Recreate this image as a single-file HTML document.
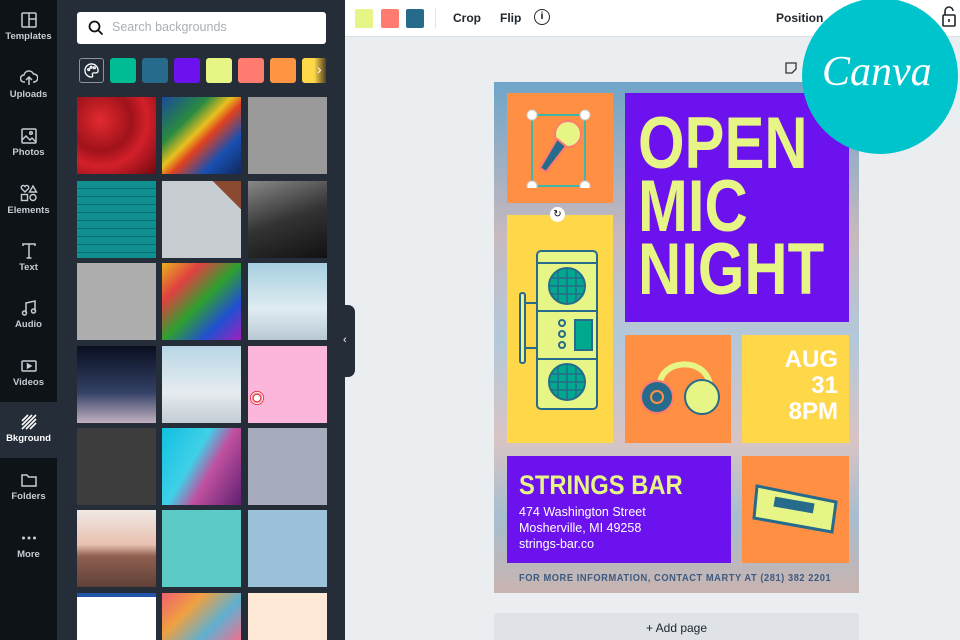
<!DOCTYPE html>
<html style="overflow:hidden;width:960px;height:640px"><head><meta charset="utf-8"><style>
*{margin:0;padding:0;box-sizing:border-box}
body{width:960px;height:640px;overflow:hidden;position:relative;font-family:"Liberation Sans",sans-serif;background:#ebeef1}
.abs{position:absolute}
.rail{left:0;top:0;width:57px;height:640px;background:#0e1318}
.ri{position:absolute;left:0;width:57px;text-align:center;color:#c7ccd3;font-size:9.5px;font-weight:bold}
.ri svg{display:block;margin:0 auto 3px}
.panel{left:57px;top:0;width:288px;height:640px;background:#252d39}
.t{position:absolute;width:79px;height:77px}
.top{left:345px;top:0;width:615px;height:37px;background:#fff;border-bottom:1px solid #dde1e5}
.box{position:absolute}
</style></head><body>
<div class="abs rail"></div>
<div class="abs" style="left:0;top:402px;width:57px;height:56px;background:#252d39"></div>
<div class="ri" style="top:12px"><svg width="16" height="16" viewBox="0 0 16 16" fill="none" stroke="#c7ccd3" stroke-width="1.5"><rect x="1" y="1" width="14" height="14" rx="1"/><path d="M8 1v14M8 7h7"/></svg>Templates</div>
<div class="ri" style="top:70px"><svg width="18" height="16" viewBox="0 0 18 16" fill="none" stroke="#c7ccd3" stroke-width="1.5"><path d="M5 12H4a3.5 3.5 0 0 1 0-7 5 5 0 0 1 9.5-1A4 4 0 0 1 14 12h-1M9 15V7M6 10l3-3 3 3"/></svg>Uploads</div>
<div class="ri" style="top:128px"><svg width="16" height="16" viewBox="0 0 16 16" fill="none" stroke="#c7ccd3" stroke-width="1.5"><rect x="1" y="1" width="14" height="14" rx="1"/><path d="M1 12l4-4 4 4 2-2 4 4"/><circle cx="10" cy="5" r="1.3"/></svg>Photos</div>
<div class="ri" style="top:184px"><svg width="18" height="18" viewBox="0 0 18 18" fill="none" stroke="#c7ccd3" stroke-width="1.4"><path d="M5 8L1.5 4.5a2 2 0 0 1 3.5-2 2 2 0 0 1 3.5 2zM13 2l3.5 6h-7z"/><rect x="1.5" y="10.5" width="6" height="6"/><circle cx="13" cy="13.5" r="3"/></svg>Elements</div>
<div class="ri" style="top:243px"><svg width="16" height="16" viewBox="0 0 16 16" fill="none" stroke="#c7ccd3" stroke-width="1.5"><path d="M2 3V1h12v2M8 1v14M5.5 15h5"/></svg>Text</div>
<div class="ri" style="top:300px"><svg width="16" height="16" viewBox="0 0 16 16" fill="none" stroke="#c7ccd3" stroke-width="1.5"><path d="M5 13V3l9-2v10"/><circle cx="3.5" cy="13" r="2"/><circle cx="12.5" cy="11" r="2"/></svg>Audio</div>
<div class="ri" style="top:358px"><svg width="16" height="16" viewBox="0 0 16 16" fill="none" stroke="#c7ccd3" stroke-width="1.5"><rect x="1" y="3" width="14" height="10" rx="1"/><path d="M6.5 6v4l3.5-2z" fill="#c7ccd3"/></svg>Videos</div>
<div class="ri" style="top:414px;color:#fff"><svg width="16" height="16" viewBox="0 0 16 16" stroke="#fff" stroke-width="1.6"><path d="M1 7l6-6M1 11l10-10M1 15l14-14M5 15l10-10M9 15l6-6"/></svg>Bkground</div>
<div class="ri" style="top:472px"><svg width="16" height="16" viewBox="0 0 16 16" fill="none" stroke="#c7ccd3" stroke-width="1.5"><path d="M1 3h5l1.5 2H15v9H1z"/></svg>Folders</div>
<div class="ri" style="top:530px"><svg width="16" height="16" viewBox="0 0 16 16" fill="#c7ccd3"><circle cx="2.5" cy="8" r="1.5"/><circle cx="8" cy="8" r="1.5"/><circle cx="13.5" cy="8" r="1.5"/></svg>More</div>

<div class="abs panel"></div>
<div class="abs" style="left:77px;top:12px;width:249px;height:32px;background:#fff;border-radius:3px"></div>
<svg class="abs" style="left:88px;top:20px" width="16" height="16" viewBox="0 0 16 16" fill="none" stroke="#111" stroke-width="1.8"><circle cx="6.5" cy="6.5" r="5"/><path d="M10.5 10.5l4 4"/></svg>
<div class="abs" style="left:112px;top:20px;font-size:12.5px;color:#a9afb6">Search backgrounds</div>
<div class="abs" style="left:79px;top:58px;width:25px;height:25px;border:1.5px solid #8b939d;border-radius:3px"></div>
<svg class="abs" style="left:84px;top:63px" width="15" height="15" viewBox="0 0 16 16" fill="none" stroke="#fff" stroke-width="1.4"><path d="M8 1a7 7 0 0 0 0 14c1.5 0 1.5-1.5 1-2.5s0-2 1.5-2H13a2 2 0 0 0 2-2A7 7 0 0 0 8 1z"/><circle cx="5" cy="7" r="1"/><circle cx="7.5" cy="4.5" r="1"/><circle cx="11" cy="5" r="1"/></svg>
<div class="abs" style="left:110px;top:58px;width:26px;height:25px;background:#00bc94;border-radius:3px"></div>
<div class="abs" style="left:142px;top:58px;width:26px;height:25px;background:#266b8c;border-radius:3px"></div>
<div class="abs" style="left:174px;top:58px;width:26px;height:25px;background:#6b12ee;border-radius:3px"></div>
<div class="abs" style="left:206px;top:58px;width:26px;height:25px;background:#e6f585;border-radius:3px"></div>
<div class="abs" style="left:238px;top:58px;width:26px;height:25px;background:#ff7b70;border-radius:3px"></div>
<div class="abs" style="left:270px;top:58px;width:26px;height:25px;background:#ff9443;border-radius:3px"></div>
<div class="abs" style="left:302px;top:58px;width:24px;height:25px;background:linear-gradient(90deg,#ffd84a,#ffd84a 50%,#504020);border-radius:3px 0 0 3px"></div>
<div class="abs" style="left:317px;top:61px;color:#fff;font-size:14px">›</div>

<div class="t" style="left:77px;top:97px;background:radial-gradient(circle at 30% 30%,#e22a30,#a0121a 40%,#d3202a 60%,#700810)"></div>
<div class="t" style="left:162px;top:97px;background:linear-gradient(135deg,#1a4a9a,#2a8a40 30%,#e8c020 45%,#e04020 55%,#1850b0 75%,#102860)"></div>
<div class="t" style="left:248px;top:97px;background:#9a9a9a"></div>
<div class="t" style="left:77px;top:181px;background:repeating-linear-gradient(#0f8f90 0 7px,#0a6a6c 7px 8px)"></div>
<div class="t" style="left:162px;top:181px;background:linear-gradient(225deg,#8a4a30 18%,#c7ccd1 18%)"></div>
<div class="t" style="left:248px;top:181px;background:linear-gradient(160deg,#888,#333 50%,#111)"></div>
<div class="t" style="left:77px;top:263px;background:#aeaeae"></div>
<div class="t" style="left:162px;top:263px;background:linear-gradient(135deg,#e8b020,#e04040 25%,#30a030 50%,#2050d0 75%,#a020c0)"></div>
<div class="t" style="left:248px;top:263px;background:linear-gradient(#a7cfe0,#e0ecf2 60%,#b8c8d4)"></div>
<div class="t" style="left:77px;top:346px;background:linear-gradient(#0a0f1f,#334065 60%,#c0b0c0)"></div>
<div class="t" style="left:162px;top:346px;background:linear-gradient(#b8d6e6,#e6ecef 60%,#c3ccd4)"></div>
<div class="t" style="left:248px;top:346px;background:#fcb6dc"></div>
<div class="abs" style="left:250px;top:391px;width:14px;height:14px;border-radius:50%;background:radial-gradient(#fff 30%,#e02030 35%,#fff 60%,#e02030 65%)"></div>
<div class="t" style="left:77px;top:428px;background:#3d3d3d"></div>
<div class="t" style="left:162px;top:428px;background:linear-gradient(120deg,#10c0e0,#40d0e8 40%,#c050a0 60%,#602070)"></div>
<div class="t" style="left:248px;top:428px;background:#a6acbb"></div>
<div class="t" style="left:77px;top:510px;background:linear-gradient(#f0e8e4,#e8c0b0 45%,#906050 60%,#604038)"></div>
<div class="t" style="left:162px;top:510px;background:#5ccbc7"></div>
<div class="t" style="left:248px;top:510px;background:#9cc1da"></div>
<div class="t" style="left:77px;top:593px;height:47px;background:#fff;border-top:4px solid #2255aa"></div>
<div class="t" style="left:162px;top:593px;height:47px;background:linear-gradient(135deg,#f06070,#f0a040,#60b0d0,#f07090)"></div>
<div class="t" style="left:248px;top:593px;height:47px;background:#fde9d6"></div>
<div class="abs" style="left:341px;top:305px;width:14px;height:72px;background:#252d39;border-radius:0 7px 7px 0"></div>
<div class="abs" style="left:343px;top:334px;color:#fff;font-size:11px">‹</div>

<div class="abs top"></div>
<div class="abs" style="left:355px;top:9px;width:18px;height:19px;background:#e6f585;border-radius:2px"></div>
<div class="abs" style="left:381px;top:9px;width:18px;height:19px;background:#ff7b70;border-radius:2px"></div>
<div class="abs" style="left:406px;top:9px;width:18px;height:19px;background:#266b8c;border-radius:2px"></div>
<div class="abs" style="left:435px;top:8px;width:1px;height:20px;background:#e2e5e8"></div>
<div class="abs" style="left:453px;top:11px;font-size:12px;font-weight:bold;color:#20262c">Crop</div>
<div class="abs" style="left:500px;top:11px;font-size:12px;font-weight:bold;color:#20262c">Flip</div>
<div class="abs" style="left:534px;top:9px;width:16px;height:16px;border:1.6px solid #20262c;border-radius:50%;font-size:10px;font-weight:bold;text-align:center;line-height:13px">i</div>
<div class="abs" style="left:776px;top:11px;font-size:12px;font-weight:bold;color:#20262c">Position</div>
<svg class="abs" style="left:941px;top:6px" width="16" height="22" viewBox="0 0 16 22" fill="none" stroke="#20262c" stroke-width="1.6"><path d="M4 9V5a4 4 0 0 1 8 0"/><rect x="2" y="9" width="12" height="11" rx="1"/><path d="M8 13v3"/></svg>

<svg class="abs" style="left:784px;top:61px" width="14" height="14" viewBox="0 0 14 14" fill="none" stroke="#333" stroke-width="1.3"><path d="M2 2h10v6l-4 4H2z"/></svg>

<div class="abs" style="left:494px;top:82px;width:365px;height:511px;background:linear-gradient(180deg,#6fa5c8 0%,#c7b9bf 30%,#b3c8da 50%,#d8c4c4 70%,#a7bed0 85%,#c8b4b0 100%)"></div>
<div class="box" style="left:507px;top:93px;width:106px;height:110px;background:#ff8f43"></div>
<div class="box" style="left:625px;top:93px;width:224px;height:229px;background:#6b12ee"></div>
<div class="box" style="left:507px;top:215px;width:106px;height:228px;background:#ffd84a"></div>
<div class="box" style="left:625px;top:335px;width:106px;height:108px;background:#ff8f43"></div>
<div class="box" style="left:742px;top:335px;width:107px;height:108px;background:#ffd84a"></div>
<div class="box" style="left:507px;top:456px;width:224px;height:107px;background:#6b12ee"></div>
<div class="box" style="left:742px;top:456px;width:107px;height:107px;background:#ff8f43"></div>

<div class="abs" style="left:638px;top:112px;font-size:73px;line-height:63px;font-weight:bold;color:#e6f585;transform:scaleX(0.82);transform-origin:left;white-space:nowrap">OPEN<br>MIC<br>NIGHT</div>
<div class="abs" style="left:760px;top:347px;width:78px;text-align:right;font-size:24px;line-height:26px;font-weight:bold;color:#fff">AUG<br>31<br>8PM</div>
<div class="abs" style="left:519px;top:470px;font-size:27px;font-weight:bold;color:#e6f585;transform:scaleX(0.88);transform-origin:left;white-space:nowrap">STRINGS BAR</div>
<div class="abs" style="left:519px;top:504px;font-size:12.5px;line-height:16px;color:#fff">474 Washington Street<br>Mosherville, MI 49258<br>strings-bar.co</div>
<div class="abs" style="left:519px;top:573px;font-size:10px;color:#3d5a80;font-weight:bold;letter-spacing:0.6px;white-space:nowrap;transform:scaleX(0.93);transform-origin:left">FOR MORE INFORMATION, CONTACT MARTY AT (281) 382 2201</div>

<svg class="abs" style="left:520px;top:108px" width="80" height="80" viewBox="0 0 80 80">
<rect x="12" y="7" width="53" height="71" fill="none" stroke="#00c4cc" stroke-width="1.5"/>
<circle cx="48" cy="26" r="13" fill="#e6f585" stroke="#ff7b70" stroke-width="2"/>
<path d="M37 31L20 60l6 4 20-26z" fill="#266b8c" stroke="#ff7b70" stroke-width="2"/>
<circle cx="12" cy="7" r="5" fill="#fff" stroke="#ccc"/><circle cx="65" cy="7" r="5" fill="#fff" stroke="#ccc"/><circle cx="12" cy="78" r="5" fill="#fff" stroke="#ccc"/><circle cx="65" cy="78" r="5" fill="#fff" stroke="#ccc"/>
</svg>
<div class="abs" style="left:550px;top:207px;width:15px;height:15px;border-radius:50%;background:#fff;font-size:10px;text-align:center;line-height:15px">↻</div>
<svg class="abs" style="left:515px;top:248px" width="90" height="165" viewBox="0 0 90 165" fill="none" stroke="#266b8c" stroke-width="2">
<rect x="22" y="3" width="60" height="158" rx="4" fill="#e6f585"/>
<path d="M22 15h60M22 63h60M22 111h60"/>
<circle cx="52" cy="38" r="18" fill="#00a88e"/><circle cx="52" cy="134" r="18" fill="#00a88e"/>
<path d="M52 20v36M34 38h36M52 116v36M34 134h36M43 22v32M61 22v32M36 30h32M36 46h32M43 118v32M61 118v32M36 126h32M36 142h32" stroke-width="1.5"/>
<rect x="60" y="72" width="17" height="30" fill="#00a88e"/>
<circle cx="47" cy="75" r="3"/><circle cx="47" cy="86" r="3"/><circle cx="47" cy="97" r="3"/>
<rect x="5" y="45" width="5" height="70" rx="2" fill="#e6f585"/><path d="M10 55h12M10 100h12"/>
</svg>
<svg class="abs" style="left:635px;top:350px" width="88" height="80" viewBox="0 0 88 80">
<path d="M25 35C25 10 70 5 75 35" fill="none" stroke="#e6f585" stroke-width="6"/>
<circle cx="22" cy="47" r="16" fill="#266b8c" stroke="#ff7b70" stroke-width="2"/>
<circle cx="22" cy="47" r="6" fill="none" stroke="#ff8f43" stroke-width="2"/>
<circle cx="67" cy="47" r="17" fill="#e6f585" stroke="#266b8c" stroke-width="2"/>
</svg>
<svg class="abs" style="left:752px;top:478px" width="90" height="60" viewBox="0 0 90 60">
<path d="M5 8L84 24 80 54 2 40z" fill="#e6f585" stroke="#266b8c" stroke-width="3"/>
<rect x="22" y="22" width="40" height="10" fill="#266b8c" transform="rotate(10 42 27)"/>
</svg>

<div class="abs" style="left:494px;top:613px;width:365px;height:27px;background:#dfe3e8;border-radius:3px 3px 0 0;text-align:center;font-size:12px;color:#20262c;line-height:30px">+ Add page</div>

<div class="abs" style="left:802px;top:-2px;width:156px;height:156px;border-radius:50%;background:#00c4cc"></div>
<div class="abs" style="left:822px;top:48px;font-family:'Liberation Serif',serif;font-style:italic;font-size:42px;color:#fff">Canva</div>
</body></html>
